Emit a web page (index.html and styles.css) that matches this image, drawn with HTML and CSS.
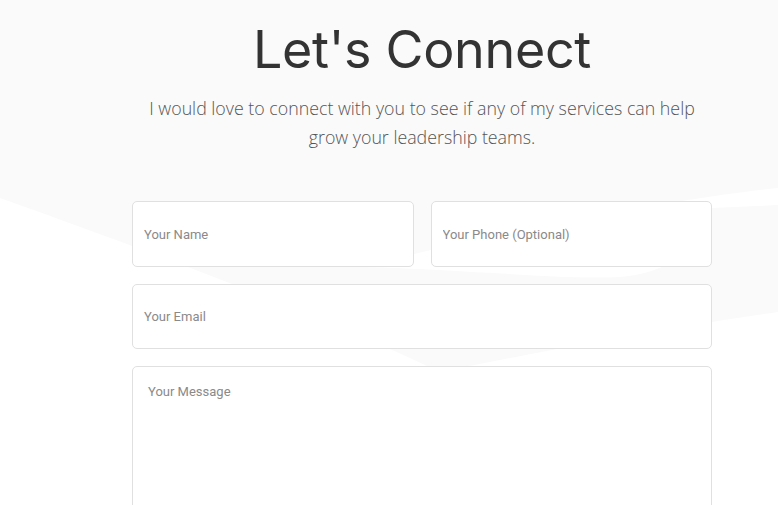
FILE: index.html
```html
<!DOCTYPE html>
<html lang="en">
<head>
  <meta charset="UTF-8" />
  <meta name="viewport" content="width=device-width, initial-scale=1.0" />
  <title>Let's Connect</title>
  <link rel="stylesheet" href="styles.css">
</head>
<body>
  <section class="contact">
    <svg class="contact-bg" width="778" height="505" viewBox="0 0 778 505" preserveAspectRatio="none">
      <path d="M0,0 H778 V188 C700,196 520,225 363,267 C480,270 560,280 620,277 C680,272 700,240 712,208 L778,205 V312 C650,330 540,352 440,372 C330,320 180,262 0,198 Z" fill="#fafafa"/>
    </svg>

    <div class="contact-inner">
      <h1>Let's Connect</h1>
      <p class="intro">I would love to connect with you to see if any of my services can help grow your leadership teams.</p>

      <form class="contact-form">
        <input type="text" placeholder="Your Name" />
        <input type="text" placeholder="Your Phone (Optional)" />
        <input type="email" class="wide" placeholder="Your Email" />
        <textarea class="wide" placeholder="Your Message"></textarea>
      </form>
    </div>
  </section>
</body>
</html>
```

FILE: styles.css
```css
* {
  box-sizing: border-box;
  margin: 0;
  padding: 0;
}
body {
  background: #fff;
  color: #333;
  font-family: 'Open Sans', sans-serif;
  overflow: hidden;
}
.contact {
  position: relative;
  height: 505px;
  overflow: hidden;
}
.contact-bg {
  position: absolute;
  top: 0;
  left: 0;
}
.contact-inner {
  position: relative;
  width: 580px;
  margin-left: 132px;
  text-align: center;
}
h1 {
  padding-top: 17px;
  font-family: 'Inter', sans-serif;
  font-weight: 400;
  font-size: 52px;
  line-height: 65px;
  letter-spacing: -0.3px;
  color: #333;
}
.intro {
  width: 570px;
  margin: 12px 0 0 5px;
  font-size: 17.8px;
  line-height: 29px;
  font-weight: 300;
  color: #555;
}
.contact-form {
  display: grid;
  grid-template-columns: 1fr 1fr;
  gap: 17px;
  margin-top: 49px;
  text-align: left;
}
.contact-form .wide {
  grid-column: 1 / 3;
}
input, textarea {
  display: block;
  width: 100%;
  height: 66px;
  padding: 0 11px;
  border: 1px solid #e0e0e0;
  border-radius: 5px;
  background: #fff;
  font-family: 'Roboto', sans-serif;
  font-size: 13px;
  color: #333;
  outline: none;
}
input.wide {
  height: 65px;
}
textarea {
  height: 180px;
  padding: 17px 15px;
  resize: none;
}
::placeholder {
  color: #8a8a8a;
}
```
